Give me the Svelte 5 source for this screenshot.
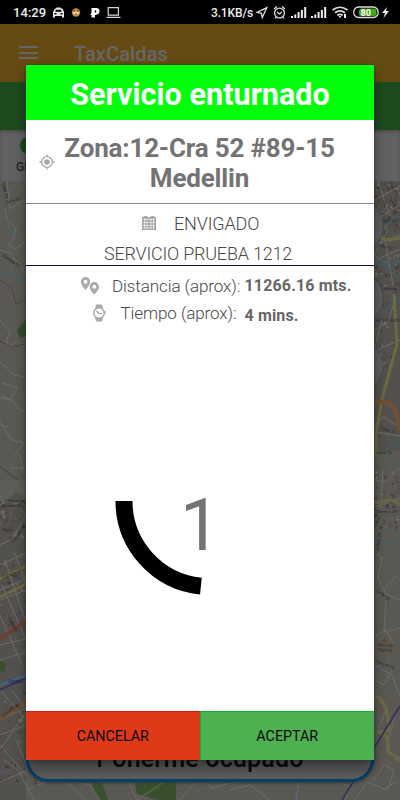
<script>
  // Small building blocks scattered over the dense parts of the map
  function blocks(x0, y0, w, h, n, seed) {
    let s = seed;
    const r = () => (s = (s * 16807) % 2147483647) / 2147483647;
    return Array.from({ length: n }, () => ({
      x: x0 + r() * w, y: y0 + r() * h, w: 1 + r() * 3, h: 1 + r() * 2.5, a: r() * 90,
      c: ['#494844', '#6c6a65', '#51483f', '#3f3e3b'][Math.floor(r() * 4)]
    }));
  }
  const buildings = [
    ...blocks(374, 181, 26, 54, 110, 17),
    ...blocks(374, 245, 26, 60, 35, 99),
    ...blocks(374, 320, 20, 50, 22, 71),
    ...blocks(374, 466, 26, 60, 45, 54),
    ...blocks(0, 498, 26, 40, 40, 31),
    ...blocks(0, 555, 26, 70, 40, 77),
    ...blocks(0, 690, 26, 90, 30, 13)
  ];
  const streets = [
    'M7 181l3 28 8-6 10-3M5 208l2 12 9 8-2 10-6 7 8 4 10-9M0 250l10 3 10 12 6 10M0 320l10 12-4 10 5 4 6-6M0 362l14 13 10 2M2 383l16 5-8 12-8-4M0 398l12 2 10 12 4-3M0 422l12 18 12 3-10 12M0 425l8 2M10 468h16M20 455l3 16',
    'M0 505l8-4 9 3 9-8M0 545l12-6 14-24M0 565l26-12M0 590l26-11M0 600l26-10M0 645l26-6M0 660l26-8M0 720l26-12M0 735l26-10M5 560l20 60M15 553l11 32M2 585l24 55M0 615l22 50M0 690l26 30M12 690l14 20M0 750l26-38M0 745l26 30M4 760l14 10 16 30M16 740l12 28M0 782l30-13',
    'M374 200l26-14M374 222l26-18M374 245l26-10M378 181l12 35M388 230l-14 25 14 9M374 261l26-12M385 240l8 45M374 330l14-8 8-25M382 320l-8 30M376 350l24-10M374 425l10-8 12 8M376 432l24 4',
    'M374 480l10 2 16-14M374 507l26-9M383 470l-2 40M374 550l8 8-4 20 8 16 14 6M374 600l22-24M374 637l12-7 8 15M386 600l-2 32 16-4M374 665l18 10 8 22M374 680l10 5 8-15M374 780l10-15 10 5-6 20M376 695l10 15-8 20M396 710l-10 40 14 8M382 790l14-8',
    'M26 790l35-14 25 24M70 780l20 5 10 15M125 775l12 25 30-20M180 800l20-24 12 12 30-8M230 790l20-5 20 15M300 775l-4 25M330 777l20 10-5 13M355 800l12-18 20 8'
  ];
  const labels = [
    { t: 'Carrera 27', x: 3, y: 579, r: -22 }, { t: 'Carrera 48', x: 3, y: 717, r: -33 },
    { t: 'Cabecera', x: 5, y: 502, r: 0 }, { t: 'Carrera 63', x: 1, y: 507, r: 0 },
    { t: 'María', x: 2, y: 531, r: 0 }, { t: 'Carrera 28', x: 14, y: 543, r: -55 },
    { t: 'Calle 40', x: 8, y: 618, r: 64 }, { t: 'Calle 61', x: 34, y: 772, r: 90 },
    { t: 'Calle 78', x: 2, y: 183, r: 78 }, { t: 'Calle 87', x: 6, y: 204, r: -15 },
    { t: 'Carrera 57', x: 2, y: 256, r: 35 }, { t: 'Cl 113', x: 384, y: 205, r: -15 },
    { t: 'Calle 11', x: 380, y: 221, r: 8 }, { t: 'Calle 10', x: 377, y: 246, r: 15 },
    { t: 'La Florida', x: 378, y: 290, r: 0 }, { t: 'Calle 31', x: 380, y: 429, r: 20 },
    { t: 'Calle 10', x: 376, y: 454, r: 0 }, { t: 'Carrera 33', x: 378, y: 553, r: -82 },
    { t: 'Calle 15', x: 376, y: 591, r: 38 }, { t: 'Carrera 29', x: 375, y: 662, r: 22 },
    { t: 'Carrera 25', x: 376, y: 513, r: 0 }
  ];
</script>

<div class="screen">
  <svg class="map" viewBox="0 0 400 800" aria-hidden="true">
    <rect width="400" height="800" fill="#5a5853" />
    <path d="M0 480h26v320H0zM374 181h26v270h-26z" fill="#53514d" />
    <path d="M0 480h26v18l-10-6-16 14z" fill="#5f5d57" />
    <path d="M17 330l9-10v16l-6 2z" fill="#344c2d" />
    <path d="M0 660l6 4-2 8-4-2zM88 776l14 6 6 18h-9zM134 774l42 2v24h-17l-22-6z" fill="#39502f" />
    <path d="M10 614l10-6 5 8-9 8zM0 765l12 4-3 8-9 2z" fill="#584e55" />
    {#each buildings as b}
      <rect x={b.x} y={b.y} width={b.w} height={b.h} fill={b.c} transform="rotate({b.a} {b.x} {b.y})" />
    {/each}
    {#each streets as d}
      <path {d} fill="none" stroke="#6e6c69" stroke-width="1" />
    {/each}
    <path d="M8 230l6 5 4-3M0 273l8 2 5-3 5 7 8-2M374 225l8 3 10-8 8-4M380 258l10 12 8 8M374 266l26-5M384 312l16-15M374 536l14 8 10-4M376 670l8-3M381 453l19-12" fill="none" stroke="#3c6169" stroke-width="1.2" />
    <path d="M0 280l12 8 4 16 10-5M0 341l12 6 14-3" fill="none" stroke="#46403d" stroke-width="1" stroke-dasharray="3 1" />
    <path d="M0 579l26-13M0 597l26-13v-10M374 236l16 4 10-2M394 294l3 50-15 55-6 35v21M374 503l16-3 10 3M374 696q8 0 13 15l2 20-10 1 8 5 2 15 11 9" fill="none" stroke="#6b6842" stroke-width="3" />
    <path d="M0 640l10-8 16-11" fill="none" stroke="#6b3f34" stroke-width="4" />
    <path d="M0 719l26-17M374 403q18-4 22 10l4 18" fill="none" stroke="#705134" stroke-width="4" />
    <path d="M0 685l26-10" fill="none" stroke="#3f6575" stroke-width="2.5" />
    <path d="M0 690l26-12M342 800l58-94" fill="none" stroke="#382f5c" stroke-width="1.7" />
    <path d="M298 774v15l-4 11" fill="none" stroke="#52627b" stroke-width="2" stroke-dasharray="2 1" />
    <path d="M0 467l18 13" stroke="#403e44" />
    {#each labels as l}
      <text x={l.x} y={l.y} font-size="4.4" fill="#252525" transform="rotate({l.r} {l.x} {l.y})">{l.t}</text>
    {/each}
    <text x="8" y="683" font-size="6" fill="#2b2456">Itagüí</text>
    <text x="375.500" y="322" font-size="4.600" fill="#353739">AP-Poblado</text>
    <path d="M382 642l2.500-4 2.500 4z" fill="#744018" />
    <g font-size="5" fill="#3e3027" text-anchor="middle">
      <text x="385" y="647">Alto La</text><text x="385" y="652">Palma</text>
    </g>
    <g fill="#5d5d5c" stroke="#4b4b49">
      <circle cx="358" cy="226" r="25" /><circle cx="358" cy="298" r="25" /><circle cx="358" cy="366" r="25" />
    </g>
  </svg>

  <header class="status">
    <span class="time">14:29</span>
    <svg class="left-icons" width="72" height="24" viewBox="0 0 72 24" aria-hidden="true">
      <path fill="#e8e8e8" fill-rule="evenodd" d="M4 8.500h1l.5-1h4l.5 1h1.500l1.500 3.500v5.500h-2V16h-7v1.500H2V12zM5 9.700l-.8 2h6.600l-.8-2zM3.500 13v1.500h2V13zm6 0v1.500h2V13z" />
      <circle cx="25" cy="12.500" r="4.200" fill="#c68a35" />
      <path fill="#f0d9b0" d="M22 11.500h6v2l-3 2-3-2z" /><path d="M22 11h2m2 0h2m-4 3h2" stroke="#44311e" />
      <path fill="#fff" fill-rule="evenodd" d="M40.500 8H45q3.500 0 3.500 3.300 0 3.400-4.500 3.700v2.500h-3.500V15H39q1.500-1 1.500-3zM43.800 10.300v2.500q1.500 0 1.500-1.300t-1.500-1.200z" />
      <path fill="none" stroke="#d5d5d5" stroke-width="1.200" d="M57.200 7.600h10.200v7.500H57.200zM55.500 17.300h14" />
    </svg>
    <span class="speed">3.1KB/s</span>
    <svg class="right-icons" width="136" height="24" viewBox="0 0 136 24" aria-hidden="true">
      <g fill="none" stroke="#ddd" stroke-width="1.300">
        <path d="M1 12.300l9.800-4.600-4.500 9.800-1-4.200z" />
        <circle cx="23.500" cy="13" r="4.900" /><path d="M21 12l2.500 2 2.200-2M18 9l3-2.500M26 6.500L29 9M20 17l-1 1.500M27 17l1 1.500" />
        <path d="M76.500 10q7.500-5.500 15 0M79 12.800q5-3.700 10 0M81.300 15.300q2.700-2 5.400 0" stroke-width="1.700" />
        <rect x="97.700" y="7" width="24.500" height="10.500" rx="5" />
      </g>
      <path fill="#eee" d="M82.500 16h3L84 18zM88 14h2v4h-2zM131 7l-5 6h3l-1.500 5 5.500-7h-3z" />
      <path stroke="#eee" stroke-width="2" d="M36 18v-2m3.300 2v-3.500m3.300 3.500v-6m3.300 6v-8m3.300 8V7M56 18v-2m3.300 2v-3.500m3.300 3.500v-6m3.300 6v-8m3.300 8V7" />
      <rect x="103" y="8.500" width="17.500" height="7.500" rx="2.500" fill="#3da718" />
      <text x="109.700" y="15.600" text-anchor="middle" font-size="9" font-weight="700" fill="#fff">80</text>
    </svg>
  </header>

  <div class="appbar">
    <span class="menu"><i></i><i></i><i></i></span>
    <span class="app-name">TaxCaldas</span>
  </div>
  <div class="band"></div>
  <div class="strip"><span class="dot"></span><span class="gps">GPS</span></div>

  <div class="busy"><span>Ponerme ocupado</span></div>

  <section class="dialog">
    <h1><span>Servicio enturnado</span></h1>
    <div class="address">
      <svg width="16" height="16" viewBox="0 0 16 16" aria-hidden="true">
        <g fill="none" stroke="#a5a5a5" stroke-width="1.300"><circle cx="8" cy="8" r="5.300" /><path d="M8 .5v2.300M8 13.200v2.300M.5 8h2.300M13.200 8h2.300" /></g>
        <circle cx="8" cy="8" r="2.800" fill="#a5a5a5" />
      </svg>
      <p><span class="zone">Zona:12-Cra 52 #89-15</span><br /><span class="city">Medellin</span></p>
    </div>
    <div class="place">
      <div class="town">
        <svg width="16" height="16" viewBox="0 0 16 16" aria-hidden="true">
          <path fill="#a3a3a3" d="M1 3.500Q1 1.500 4.500 1 7 1 8 2.500 9 1 11.500 1 15 1.500 15 3.500V15H1z" />
          <path stroke="#fff" stroke-width=".6" d="M2 4.500h12M2 7.500h12M2 10.500h12M2 13h12M3.500 3v11M6 3v11M10 3v11M12.500 3v11" />
        </svg>
        <span>ENVIGADO</span>
      </div>
      <div class="service"><span>SERVICIO PRUEBA 1212</span></div>
    </div>
    <div class="row distance">
      <svg width="20" height="18" viewBox="0 0 20 18" aria-hidden="true">
        <path fill="#aaa" fill-rule="evenodd" d="M5.500 0A4.700 4.700 0 0 0 .8 4.700C.8 8 5.500 13 5.500 13s4.700-5 4.700-8.300A4.700 4.700 0 0 0 5.500 0zm0 2.700a2 2 0 1 1 0 4 2 2 0 0 1 0-4zM14.300 5a4.700 4.700 0 0 0-4.700 4.700c0 3.300 4.700 8 4.700 8s4.700-4.700 4.700-8A4.700 4.700 0 0 0 14.300 5zm0 2.700a2 2 0 1 1 0 4 2 2 0 0 1 0-4z" />
      </svg>
      <span class="label">Distancia (aprox):</span><b>11266.16 mts.</b>
    </div>
    <div class="row duration">
      <svg width="14" height="18" viewBox="0 0 14 18" aria-hidden="true">
        <path fill="#aaa" d="M4 .5h6l1 4H3zM3 13.500h8l-1 4H4zM12 7h1.500v3H12z" />
        <circle cx="7" cy="9" r="5.200" fill="#fff" stroke="#aaa" stroke-width="1.500" />
        <path fill="none" stroke="#999" stroke-width="1.200" d="M4.500 7L7 9.500h3" />
      </svg>
      <span class="label">Tiempo (aprox):</span><b>4 mins.</b>
    </div>
    <div class="countdown">
      <svg width="190" height="190" viewBox="0 0 190 190" aria-hidden="true">
        <path d="M10 95A85.500 85.500 0 0 0 86.900 180.100" fill="none" stroke="#000" stroke-width="17" />
      </svg>
      <span class="count">1</span>
    </div>
    <footer>
      <button class="cancel">CANCELAR</button>
      <button class="accept">ACEPTAR</button>
    </footer>
  </section>
</div>

<style>
  :global(body) { margin: 0; }
  .screen { position: relative; width: 400px; height: 800px; overflow: hidden; font-family: Roboto, "Liberation Sans", sans-serif; background: #5a5853; }
  .screen * { box-sizing: border-box; }
  .screen span, .screen b { white-space: nowrap; }
  .map { position: absolute; inset: 0; width: 400px; height: 800px; }
  .status { position: relative; height: 24px; background: #000; display: flex; align-items: center; padding-left: 13px; color: #eee; }
  .time { width: 38px; font-size: 13px; font-weight: 500; letter-spacing: .05px; padding-top: 1px; }
  .left-icons { flex: none; }
  .speed { margin-left: 88px; width: 45px; font-size: 12px; font-weight: 500; letter-spacing: -.15px; padding-top: 1px; }
  .right-icons { flex: none; }
  .appbar { position: relative; height: 58px; background: #654b13; display: flex; align-items: flex-start; padding: 22px 0 0 19px; }
  .menu { width: 19px; display: flex; flex-direction: column; gap: 3.5px; }
  .menu i { height: 2px; background: #666; }
  .app-name { margin-left: 36px; margin-top: -4px; font-size: 20px; font-weight: 500; line-height: 24px; letter-spacing: .1px; color: #666; }
  .band { position: relative; height: 48px; background: #1d4b20; }
  .strip { position: relative; height: 51px; background: #616161; padding: 7px 0 0 16px; box-shadow: inset 0 2px 3px #4d4d4d; display: flex; flex-direction: column; }
  .dot { width: 17px; height: 17px; margin-left: 4px; border-radius: 50%; background: #164b18; }
  .gps { font-size: 12px; font-weight: 500; line-height: 14px; padding-top: 6px; color: #202020; }
  .busy { position: absolute; left: 26px; top: 735px; width: 348px; height: 47px; border: 3px solid #00416a; border-radius: 23px; background: #5b5b5b; display: flex; justify-content: center; align-items: center; font-size: 25px; font-weight: 500; color: #090909; box-shadow: 0 1px 3px #333; }
  .busy span { letter-spacing: .2px; }
  .dialog { position: absolute; left: 26px; top: 65px; width: 348px; height: 695px; background: #fff; border-radius: 2px; overflow: hidden; box-shadow: 0 0 2px #333, 0 7px 12px rgba(0,0,0,.42); display: flex; flex-direction: column; color: #484848; }
  h1 { margin: 0; height: 55px; flex: none; background: #00ff0a; color: #fff; display: flex; align-items: center; justify-content: center; font-size: 30.6px; font-weight: 700; padding-top: 3px; }
  .address { height: 84px; flex: none; border-bottom: 1px solid #858589; display: flex; align-items: center; padding-left: 13px; }
  .address p { flex: none; margin: 0 0 0 9px; width: 271px; text-align: center; font-size: 26px; font-weight: 700; line-height: 30px; letter-spacing: -.18px; color: #737373; padding-top: 2px; }
  .zone { margin: 0 -4px; }
  .place { height: 62px; flex: none; border-bottom: 1px solid #1d0a27; font-size: 18px; font-weight: 300; }
  .town { display: flex; align-items: center; height: 38px; padding-left: 115px; }
  .town span { margin-left: 17px; padding-top: 1px; letter-spacing: -.15px; }
  .service { padding-left: 78px; line-height: 22px; margin-top: 1px; letter-spacing: -.22px; }
  .row { flex: none; display: flex; align-items: center; font-size: 17px; font-weight: 300; letter-spacing: -.08px; }
  .row b { font-weight: 700; font-size: 16px; letter-spacing: .15px; color: #666; }
  .distance { height: 39px; padding-left: 54px; }
  .distance .label { margin-left: 12px; width: 132.5px; }
  .duration { height: 20px; padding-left: 66px; margin-top: -2px; }
  .duration .label { margin-left: 14.5px; width: 124px; }
  .duration b { padding-top: 4px; }
  .countdown { flex: 1; display: flex; padding: 83px 0 0 88px; }
  .countdown svg { flex: none; }
  .count { margin-left: -124px; margin-top: 78px; font-size: 72px; line-height: 84px; color: #737373; }
  footer { height: 49px; flex: none; display: flex; }
  button { flex: 1; border: 0; border-top: 1px solid; font: 400 14.3px Roboto, sans-serif; color: #080808; padding: 0; }
  .cancel { background: #df3a18; border-color: #d51e12; }
  .accept { background: #4eb151; border-color: #20a937; border-left: 1px solid #00b44b; }
</style>
